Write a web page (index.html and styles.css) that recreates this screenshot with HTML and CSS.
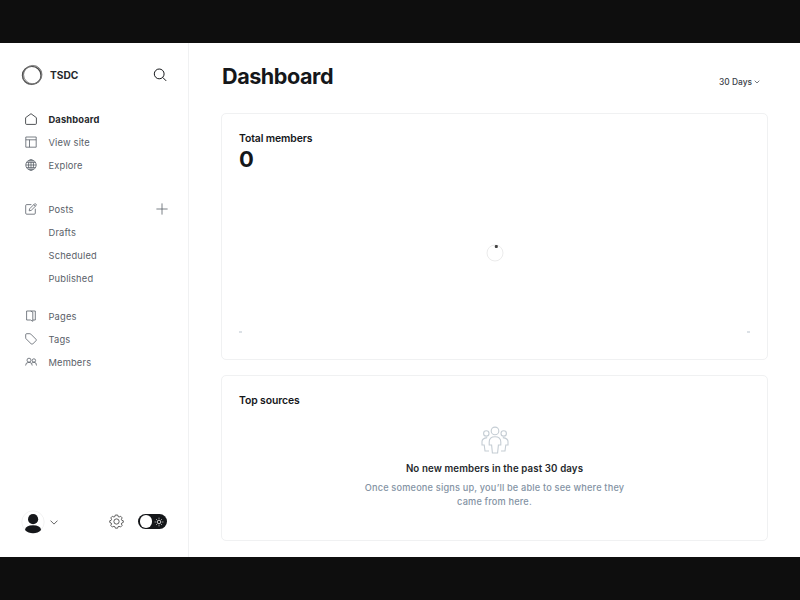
FILE: index.html
```html
<!DOCTYPE html>
<html lang="en">
<head>
<meta charset="utf-8">
<title>TSDC</title>
<link rel="stylesheet" href="styles.css">
</head>
<body>
<div class="app">
  <aside class="sidebar">
    <header class="brand">
      <svg class="logo" viewBox="0 0 22 22"><ellipse cx="10.8" cy="11.4" rx="9.3" ry="9" stroke="#444" stroke-width="1.4"/><ellipse cx="11.8" cy="10.6" rx="9.2" ry="9.2" stroke="#777" stroke-width=".8"/><ellipse cx="11.2" cy="11.2" rx="9.9" ry="8.8" transform="rotate(-45 11.2 11.2)" stroke="#777" stroke-width=".7"/></svg>
      <span class="brand-name">TSDC</span>
      <svg class="search" viewBox="0 0 14 14"><circle cx="6.2" cy="5.9" r="4.9"/><path d="M9.7 9.4l3.5 3.5"/></svg>
    </header>
    <nav>
      <ul class="group main-group">
        <li class="active"><svg viewBox="0 0 12 12"><path d="M.6 4.7L6 .7l5.4 4v5.7q0 1-1 1H1.6q-1 0-1-1z"/></svg><span>Dashboard</span></li>
        <li><svg viewBox="0 0 12 12"><path d="M.8 1h10.4v10.2H.8zM.8 3.8h10.4M4.5 3.8v7.4"/></svg><span>View site</span></li>
        <li><svg viewBox="0 0 12 12"><circle cx="6" cy="6" r="5.2"/><ellipse cx="6" cy="6" rx="2.5" ry="5.2"/><path d="M6 .8v10.4M.8 6h10.4M1.6 3.4h8.8M1.6 8.6h8.8"/></svg><span>Explore</span></li>
      </ul>
      <ul class="group posts-group">
        <li><svg viewBox="0 0 12 12"><path d="M6.4 1.6H1.7q-1 0-1 1v7.6q0 1 1 1h7.6q1 0 1-1V5.7M4.2 7.8l.4-2L9.5.9q.6-.5 1.2 0l.4.4q.5.6 0 1.2L6.2 7.4zM8.8 1.7l1.5 1.5"/></svg><span>Posts</span><svg class="plus" viewBox="0 0 12 12"><path d="M6 .4v11.2M.4 6h11.2"/></svg></li>
        <li class="sub">Drafts</li>
        <li class="sub">Scheduled</li>
        <li class="sub">Published</li>
      </ul>
      <ul class="group">
        <li><svg viewBox="0 0 12 12"><path d="M1.6 1h4l2.2 1.1v9.2L5.5 10H1.6zM5.6 1h4.7v9H7.8"/></svg><span>Pages</span></li>
        <li><svg viewBox="0 0 12 12"><path d="M.7 1.7q0-1 1-1h3.2q.5 0 .9.4l5.2 5.2q.7.7 0 1.4L7.7 11q-.7.7-1.4 0L1.1 5.8q-.4-.4-.4-.9z"/></svg><span>Tags</span></li>
        <li><svg viewBox="0 0 12 12"><circle cx="4" cy="4.2" r="2"/><circle cx="8.9" cy="4.5" r="1.7"/><path d="M.6 9.5q0-3.2 3.4-3.2t3.2 3.2M7.1 6.9q1-.7 1.9-.7 2.5 0 2.5 3.3"/></svg><span>Members</span></li>
      </ul>
    </nav>
    <footer class="user-bar">
      <svg class="avatar" viewBox="0 0 24 24"><circle class="rim" cx="12" cy="12" r="11.2"/><circle class="solid" cx="12.1" cy="9.2" r="5.1"/><path class="solid" d="M4 19.9q.6-4.6 8-4.6t8.1 4.6q-3.2 3.3-8 3.3T4 19.9z"/></svg>
      <svg class="chevron" viewBox="0 0 8 5"><path d="M.5.6L4 4.1 7.5.6"/></svg>
      <svg class="gear" viewBox="0 0 16 16"><circle cx="8" cy="8" r="2.8"/><path d="M6.7 1.1h2.6l.5 1.7 1 .4 1.6-.8 1.6 1.7-.8 1.7.4.9 1.6.5v1.8l-1.6.6-.4 1 .8 1.6-1.7 1.7-1.6-.8-1 .4-.5 1.6H6.8l-.6-1.6-1-.4-1.6.8-1.7-1.7.8-1.6-.4-1-1.5-.6V7.2l1.5-.5.4-.9L2 4.1l1.6-1.7 1.6.8 1-.4z"/></svg>
      <div class="toggle"><i></i><svg viewBox="0 0 10 10"><circle cx="5" cy="5" r="1.8"/><path d="M5 .7v1M5 8.3v1M.7 5h1M8.3 5h1M2 2l.7.7M7.3 7.3l.7.7M2 8l.7-.7M7.3 2.7L8 2"/></svg></div>
    </footer>
  </aside>
  <main>
    <header class="page-head">
      <h1>Dashboard</h1>
      <div class="range">30 Days<svg viewBox="0 0 6 4"><path d="M.7.7L3 3 5.3.7"/></svg></div>
    </header>
    <section class="card members">
      <h2>Total members</h2>
      <strong>0</strong>
      <div class="chart"><svg viewBox="0 0 18 18"><circle cx="9" cy="9" r="8"/><rect x="8.8" y="1" width="3" height="3" rx="1"/></svg></div>
      <div class="axis"><span></span><span></span></div>
    </section>
    <section class="card sources">
      <h2>Top sources</h2>
      <div class="empty">
        <svg viewBox="0 0 28 28"><circle cx="14" cy="4.9" r="3.8"/><circle cx="5.3" cy="7.4" r="2.7"/><circle cx="22.7" cy="7.4" r="2.7"/><path d="M10.6 19H8.2v-3q0-5.3 5.8-5.3t5.8 5.3v3h-2.4l-.8 8h-5.2zM6.2 11.6Q1 12.2 1 15.6V19h2.2l.8 6h4M21.8 11.6q5.2.6 5.2 4V19h-2.2l-.8 6h-4"/></svg>
        <h3>No new members in the past 30 days</h3>
        <p>Once someone signs up, you’ll be able to see where they came from here.</p>
      </div>
    </section>
  </main>
</div>
</body>
</html>
```
FILE: styles.css
```css
* { box-sizing: border-box; }
body { margin: 0; background: #0e0e0e; font-family: Inter, sans-serif; color: #15171a; }
h1, h2, h3, p, ul { margin: 0; padding: 0; }
svg { display: block; flex: none; fill: none; stroke: currentColor; }
.app { display: flex; height: 514px; margin: 43px 0; background: #fff; }
.sidebar { width: 189px; border-right: 1px solid #f0f1f2; display: flex; flex-direction: column; }
.brand { display: flex; align-items: center; height: 22px; margin: 21px 21px 0 21px; }
.logo { width: 22px; height: 22px; }
.brand-name { margin-left: 7px; font-size: 10.2px; font-weight: 700; color: #25282c; }
.search { width: 14px; height: 14px; margin-left: auto; }
nav { padding: 22px 20px 0 25px; }
.group { list-style: none; margin-bottom: 21px; }
.posts-group { margin-bottom: 14.5px; }
.group li { display: flex; align-items: center; height: 23px; font-size: 9.3px; letter-spacing: .18px; color: #596068; }
.group li svg { width: 12px; height: 12px; margin: 0 11.5px 1px 0; stroke-width: .8; }
.group li.active { font-weight: 700; letter-spacing: .15px; color: #25282c; }
.group li.sub { padding-left: 23.5px; }
.group li svg.plus { width: 12px; height: 12px; margin: 0 .5px 1px auto; }
.user-bar { display: flex; align-items: center; height: 24px; margin: auto 21px 23px 21px; }
.avatar { width: 24px; height: 24px; }
.rim { stroke: #ececec; stroke-width: .7; }
.solid { fill: #15171a; stroke: none; }
.chevron { width: 8px; height: 5px; margin-left: 5px; stroke-width: .9; color: #555; }
.gear { width: 15px; height: 15px; margin: 0 0 1px auto; stroke-width: .9; color: #444; }
.toggle { display: flex; align-items: center; justify-content: space-between; width: 29px; height: 15px; margin: 0 0 1px 14px; padding: 1px 3px 1px 1.5px; border-radius: 8px; background: #15171a; }
.toggle i { width: 12.5px; height: 12.5px; border-radius: 50%; background: #fff; }
.toggle svg { width: 10px; height: 10px; color: #fff; stroke-width: .8; }
main { flex: 1; padding: 0 32px 0 32px; }
.page-head { display: flex; height: 70px; padding: 19px 0 0 1px; justify-content: space-between; }
h1 { font-size: 21.6px; line-height: 29px; font-weight: 700; letter-spacing: -.45px; }
.range { display: flex; align-items: center; height: 12px; margin: 14px 8px 0 0; font-size: 8.4px; font-weight: 500; color: #394047; }
.range svg { width: 6px; height: 4px; margin: 0 0 1px 2px; stroke-width: .7; }
.card { border: 1px solid #f0f1f2; border-radius: 5px; padding: 17px; }
.card h2 { padding-top: 1px; font-size: 10.4px; line-height: 14px; font-weight: 600; letter-spacing: -.1px; }
.members { display: flex; flex-direction: column; height: 247px; margin-bottom: 15px; }
.members strong { font-size: 22px; line-height: 27px; font-weight: 700; letter-spacing: -.5px; }
.chart { flex: 1; display: flex; align-items: center; justify-content: center; padding: 1px 0 0 1px; }
.chart svg { width: 18px; height: 18px; }
.chart circle { stroke: #e6e6e6; stroke-width: .8; }
.chart rect { fill: #444; stroke: none; }
.axis { display: flex; justify-content: space-between; padding-bottom: 9px; }
.axis span { width: 3px; height: 2px; background: #dce1e6; }
.sources { height: 166px; }
.empty { display: flex; flex-direction: column; align-items: center; padding-top: 18px; text-align: center; }
.empty svg { width: 28px; height: 28px; color: #c5cdd4; stroke-width: 1.1; }
.empty h3 { margin-top: 8px; font-size: 9.7px; line-height: 14px; font-weight: 600; letter-spacing: .12px; color: #25282c; }
.empty p { width: 276px; margin-top: 5px; font-size: 9.2px; line-height: 13.5px; font-weight: 500; letter-spacing: .18px; color: #8493a4; }
```
